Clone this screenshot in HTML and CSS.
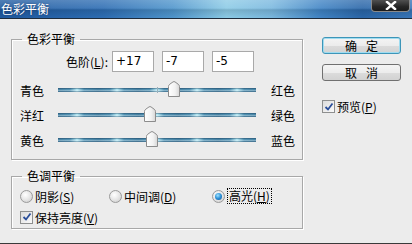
FILE: index.html
```html
<!DOCTYPE html>
<html>
<head>
<meta charset="utf-8">
<link rel="stylesheet" href="styles.css">
</head>
<body>
<div class="window">
  <div class="titlebar">
    <span class="title">色彩平衡</span>
    <div class="close"><svg width="14" height="9" viewBox="0 0 14 9"><path d="M3 1 L11 8 M11 1 L3 8" stroke="#fff" stroke-width="2.4" stroke-linecap="square"/></svg></div>
  </div>
  <div class="body">
    <div class="left">
      <fieldset class="group g1">
        <legend>色彩平衡</legend>
        <div class="levels">
          <label class="lv-label">色阶(<u>L</u>):</label>
          <div class="field">+17</div>
          <div class="field">-7</div>
          <div class="field">-5</div>
        </div>
        <div class="srow">
          <span class="sl">青色</span>
          <div class="track tick"><svg class="thumb" style="left:110px" width="12" height="16" viewBox="0 0 12 16"><use href="#th"/></svg></div>
          <span class="sr">红色</span>
        </div>
        <div class="srow">
          <span class="sl">洋红</span>
          <div class="track"><svg class="thumb" style="left:86px" width="12" height="16" viewBox="0 0 12 16"><use href="#th"/></svg></div>
          <span class="sr">绿色</span>
        </div>
        <div class="srow">
          <span class="sl">黄色</span>
          <div class="track"><svg class="thumb" style="left:88px" width="12" height="16" viewBox="0 0 12 16"><use href="#th"/></svg></div>
          <span class="sr">蓝色</span>
        </div>
      </fieldset>
      <fieldset class="group g2">
        <legend>色调平衡</legend>
        <div class="rrow">
          <span class="opt o1"><span class="radio"></span><span>阴影(<u>S</u>)</span></span>
          <span class="opt o2"><span class="radio"></span><span>中间调(<u>D</u>)</span></span>
          <span class="opt o3"><span class="radio on"></span><span class="focus">高光(<u>H</u>)</span></span>
        </div>
        <div class="rrow">
          <span class="opt"><span class="check"><svg width="10" height="10" viewBox="0 0 10 10"><path d="M1.5 5 L4 7.5 L8.5 1.5" fill="none" stroke="#2a4e9a" stroke-width="1.8"/></svg></span><span>保持亮度(<u>V</u>)</span></span>
        </div>
      </fieldset>
    </div>
    <div class="right">
      <div class="btn def">确定</div>
      <div class="btn">取消</div>
      <div class="opt preview"><span class="check"><svg width="10" height="10" viewBox="0 0 10 10"><path d="M1.5 5 L4 7.5 L8.5 1.5" fill="none" stroke="#2a4e9a" stroke-width="1.8"/></svg></span><span>预览(<u>P</u>)</span></div>
    </div>
  </div>
</div>
<svg width="0" height="0" class="defs">
  <defs>
    <linearGradient id="tg" x1="0" y1="0" x2="1" y2="0">
      <stop offset="0" stop-color="#ffffff"/>
      <stop offset="0.6" stop-color="#f2f2f2"/>
      <stop offset="1" stop-color="#d6d6d6"/>
    </linearGradient>
    <path id="th" d="M0.5,15.5 V5.5 Q0.5,4.2 1.8,3.2 L5,0.9 Q6,0.3 7,0.9 L10.2,3.2 Q11.5,4.2 11.5,5.5 V15.5 Z" fill="url(#tg)" stroke="#8c8c8c" stroke-width="1"/>
  </defs>
</svg>
</body>
</html>
```

FILE: styles.css
```css
* { box-sizing: border-box; }
html, body { margin: 0; padding: 0; }
body {
  width: 412px;
  height: 244px;
  overflow: hidden;
  background: #ececec;
  font-family: "Noto Sans CJK SC", "Noto Sans", sans-serif;
  font-size: 12px;
  color: #000;
}
.defs { position: absolute; }
.window {
  width: 412px;
  height: 244px;
  display: flex;
  flex-direction: column;
  border-bottom: 1px solid #3a3a3a;
}
.titlebar {
  height: 19px;
  flex: none;
  display: flex;
  justify-content: space-between;
  align-items: flex-start;
  border-bottom: 1px solid #1e2c3c;
  background:
    linear-gradient(to bottom, rgba(255,255,255,0.22) 0, rgba(255,255,255,0.1) 45%, rgba(0,0,0,0.12) 55%, rgba(0,0,0,0) 100%),
    linear-gradient(to right, #1f5aa0 0, #2d6db3 25%, #4f95cc 42%, #8ccbe6 55%, #7ab8df 66%, #3f83c4 78%, #2a66a8 88%, #3775b7 100%);
}
.title {
  color: #fff;
  font-size: 12px;
  line-height: 18px;
  padding-left: 1px;
  text-shadow: 0 0 2px rgba(0,20,60,0.5);
}
.close {
  width: 39px;
  height: 12px;
  margin-right: 2px;
  background: linear-gradient(#505050, #262626 60%, #1a1a1a);
  border: 1px solid #8a8a8a;
  border-top: none;
  border-radius: 0 0 4px 4px;
  display: flex;
  align-items: center;
  justify-content: center;
}
.body {
  flex: 1;
  display: flex;
}
.left {
  width: 303px;
  padding: 12px 0 0 11px;
  display: flex;
  flex-direction: column;
}
.group {
  margin: 0;
  min-width: 0;
  width: 292px;
  border: 1px solid #a8a8a8;
  box-shadow: 1px 1px 0 #fff, inset 1px 1px 0 #fff;
  padding: 0 0 6px 8px;
}
.g2 {
  margin-top: 8px;
  padding-bottom: 2px;
}
.group legend {
  margin-left: 2px;
  padding: 0 5px;
  line-height: 16px;
  font-size: 12px;
}
.levels {
  display: flex;
  align-items: center;
  margin-top: 4px;
  height: 21px;
}
.lv-label {
  width: 88px;
  margin-right: 4px;
  text-align: right;
}
.field {
  width: 42px;
  height: 21px;
  margin-right: 8px;
  background: #fff;
  border: 1px solid #a9a9a9;
  font-family: "DejaVu Sans", sans-serif;
  font-size: 12px;
  line-height: 19px;
  padding-left: 3px;
}
.srow {
  display: flex;
  align-items: center;
  height: 25px;
}
.levels + .srow { margin-top: 6px; }
.sl { width: 38px; }
.sr { margin-left: 15px; }
.track {
  position: relative;
  width: 198px;
  height: 4px;
  margin-top: -2px;
  background:
    linear-gradient(to bottom, rgba(20,50,80,0.55) 0, rgba(255,255,255,0.05) 40%, rgba(255,255,255,0.35) 60%, rgba(20,50,80,0.45) 100%),
    repeating-linear-gradient(to right, #3f7fa2 0, #4d92b4 12px, #b8eef8 19px, #4d92b4 26px, #3f7fa2 40px);
}
.tick::after {
  content: "";
  position: absolute;
  left: 99px;
  top: -1px;
  width: 1px;
  height: 6px;
  background: #9ab0bc;
}
.thumb {
  position: absolute;
  top: -7px;
}
.rrow {
  display: flex;
  align-items: center;
  height: 18px;
  margin-top: 3px;
}
.opt {
  display: flex;
  align-items: center;
}
.o1 { width: 89px; }
.o2 { width: 103px; }
.radio {
  width: 13px;
  height: 13px;
  border-radius: 50%;
  border: 1px solid #9a9a9a;
  background: radial-gradient(circle at 40% 35%, #ffffff 0, #e9e9e9 45%, #c9c9c9 100%);
  margin-right: 2px;
  position: relative;
}
.radio.on::after {
  content: "";
  position: absolute;
  left: 2px;
  top: 2px;
  width: 7px;
  height: 7px;
  border-radius: 50%;
  background: radial-gradient(circle at 40% 35%, #9fe3ff 0, #2b8fd6 50%, #154f8f 100%);
}
.focus {
  border: 1px dotted #000;
  padding: 0 1px;
  line-height: 14px;
}
.check {
  width: 13px;
  height: 13px;
  border: 1px solid #8e8f8f;
  background: linear-gradient(135deg, #dcdcdc, #fafafa);
  margin-right: 2px;
  display: flex;
  align-items: center;
  justify-content: center;
}
.right {
  padding: 18px 0 0 19px;
  display: flex;
  flex-direction: column;
}
.btn {
  width: 79px;
  height: 17px;
  border: 1px solid #707070;
  border-radius: 3px;
  background: linear-gradient(#f4f4f4 0, #ececec 50%, #dcdcdc 51%, #d2d2d2 100%);
  text-align: center;
  line-height: 15px;
  letter-spacing: 9px;
  text-indent: 9px;
  margin-bottom: 10px;
}
.btn.def {
  border-color: #3d95b8;
  box-shadow: inset 0 0 0 1px #9fdcf0;
}
.preview {
  margin-top: 7px;
}
```
